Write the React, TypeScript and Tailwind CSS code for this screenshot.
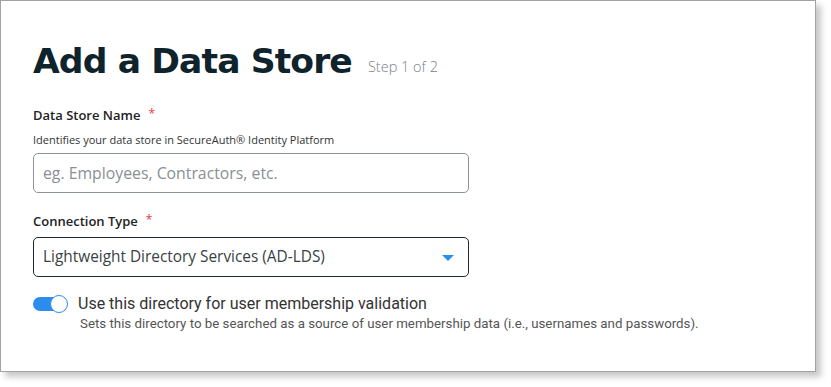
export default function App() {
  return (
    <div className="w-[831px] h-[387px] bg-white">
      <div className="w-[816px] h-[372px] border border-[#a3a3a3] bg-white shadow-[5px_5px_6px_rgba(0,0,0,0.22)] pl-8 pt-[38px] font-['Open_Sans',sans-serif]">
        <div className="flex items-end gap-[16px]">
          <h1 className="text-[34.6px] leading-[44px] font-bold text-[#0f232c] font-['DejaVu_Sans',sans-serif] tracking-[-0.9px]">
            Add a Data Store
          </h1>
          <span className="text-[14.5px] font-light text-[#7b8288] mb-[5px]">Step 1 of 2</span>
        </div>

        <div className="mt-[23px] flex items-start">
          <span className="text-[13px] font-semibold text-[#222]">Data Store Name</span>
          <span className="text-[#e23c3c] text-[12px] ml-[8px] -mt-[1px]">*</span>
        </div>
        <p className="mt-[6px] text-[11px] leading-[15px] text-[#333]">Identifies your data store in SecureAuth® Identity Platform</p>
        <input
          className="mt-[6px] w-[436px] h-[40px] rounded-[5px] border border-[#8c949a] px-[9px] text-[15.8px] text-[#333] placeholder:text-[#8a8f93] outline-none"
          placeholder="eg. Employees, Contractors, etc."
        />

        <div className="mt-[19px] flex items-start">
          <span className="text-[13px] font-semibold text-[#222]">Connection Type</span>
          <span className="text-[#e23c3c] text-[12px] ml-[8px] -mt-[1px]">*</span>
        </div>
        <div className="mt-[6px] w-[436px] h-[40px] rounded-[5px] border border-[#1d2730] px-[9px] flex items-center justify-between">
          <span className="text-[15.4px] text-[#3a3f44]">Lightweight Directory Services (AD-LDS)</span>
          <svg width="12" height="7" viewBox="0 0 12 7" className="mr-[5px] mt-[3px]">
            <path d="M0 0 H12 L6 6 Z" fill="#2d8cf0" />
          </svg>
        </div>

        <div className="mt-[17px] flex items-start gap-[10px]">
          <div className="relative w-[35px] h-[18px] mt-[1px] shrink-0">
            <div className="absolute left-0 top-[2px] w-[30px] h-[14px] rounded-full bg-[#2d8cf0]" />
            <div className="absolute right-0 top-0 w-[18px] h-[18px] rounded-full bg-white border-[1.5px] border-[#2d8cf0]" />
          </div>
          <div className="font-['Roboto',sans-serif]">
            <div className="text-[16px] text-[#333] leading-[20px]">Use this directory for user membership validation</div>
            <div className="text-[13.3px] text-[#555] leading-[17px] mt-[1px] ml-[2px]">
              Sets this directory to be searched as a source of user membership data (i.e., usernames and passwords).
            </div>
          </div>
        </div>
      </div>
    </div>
  );
}
